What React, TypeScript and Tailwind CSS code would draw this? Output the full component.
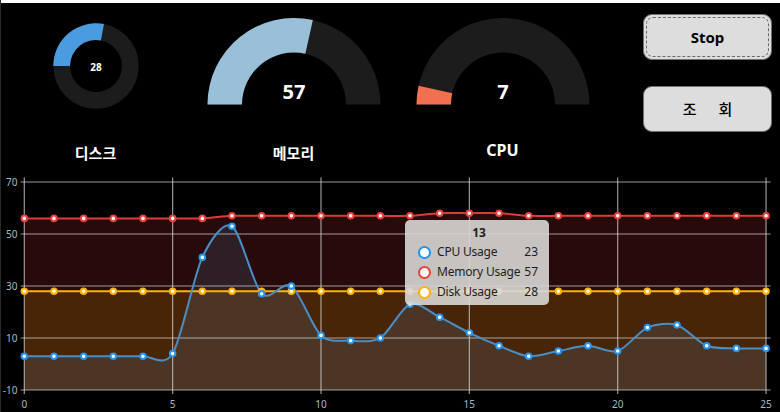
const cpu = [3, 3, 3, 3, 3, 4, 41, 53, 27, 30, 11, 9, 10, 23, 18, 12, 7, 3, 5, 7, 5, 14, 15, 7, 6, 6];
const memory = [56, 56, 56, 56, 56, 56, 56, 57, 57, 57, 57, 57, 57, 57, 58, 58, 58, 57, 57, 57, 57, 57, 57, 57, 57, 57];
const disk = Array(26).fill(28);

const X = (i: number) => 23.3 + i * 29.67;
const Y = (v: number) => 390 - (v + 10) * 2.6;

// catmull-rom -> cubic bezier (slightly relaxed tension)
function spline(data: number[]) {
    const k = 7;
    const pts = data.map((v, i) => [X(i), Y(v)]);
    let d = `M${pts[0][0]},${pts[0][1]}`;
    for (let i = 0; i < pts.length - 1; i++) {
        const p0 = pts[i - 1] || pts[i];
        const p1 = pts[i];
        const p2 = pts[i + 1];
        const p3 = pts[i + 2] || p2;
        const c1x = p1[0] + (p2[0] - p0[0]) / k;
        const c1y = p1[1] + (p2[1] - p0[1]) / k;
        const c2x = p2[0] - (p3[0] - p1[0]) / k;
        const c2y = p2[1] - (p3[1] - p1[1]) / k;
        d += ` C${c1x},${c1y} ${c2x},${c2y} ${p2[0]},${p2[1]}`;
    }
    return d;
}

const area = (data: number[]) => `${spline(data)} L${X(25)},390 L${X(0)},390 Z`;

function halfArc(cx: number, cy: number, r: number, ri: number, f0: number, f1: number) {
    const pt = (rad: number, f: number) => {
        const a = Math.PI - f * Math.PI;
        return `${cx + rad * Math.cos(a)},${cy - rad * Math.sin(a)}`;
    };
    return `M${pt(r, f0)} A${r},${r} 0 0 1 ${pt(r, f1)} L${pt(ri, f1)} A${ri},${ri} 0 0 0 ${pt(ri, f0)} Z`;
}

function ringArc(cx: number, cy: number, r: number, ri: number, f: number) {
    const pt = (rad: number, t: number) => {
        const a = Math.PI + t * 2 * Math.PI;
        return `${cx + rad * Math.cos(a)},${cy + rad * Math.sin(a)}`;
    };
    const large = f > 0.5 ? 1 : 0;
    return `M${pt(r, 0)} A${r},${r} 0 ${large} 1 ${pt(r, f)} L${pt(ri, f)} A${ri},${ri} 0 ${large} 0 ${pt(ri, 0)} Z`;
}

const Gauge = ({ value, color }: { value: number; color: string }) => (
    <svg width="174" height="87" viewBox="0 0 174 87">
        <path d={halfArc(87, 86.5, 86.5, 52, 0, 1)} fill="#1c1c1c" />
        <path d={halfArc(87, 86.5, 86.5, 52, 0, value / 100)} fill={color} />
        <text x="87" y="81" textAnchor="middle" fill="#fff" fontSize="20" fontWeight="700" fontFamily="'Noto Sans', sans-serif">
            {value}
        </text>
    </svg>
);

const labelFont = { fontFamily: "'Noto Sans', 'Noto Sans CJK KR', sans-serif" };

export default function App() {
    const xTicks = [0, 5, 10, 15, 20, 25];
    const yTicks = [70, 50, 30, 10, -10];
    return (
        <main className="w-[780px] h-[412px] bg-black overflow-hidden flex flex-col border-l border-[#2a2a2a]" style={labelFont}>
            <div className="h-[3px] bg-white shrink-0" />
            <div className="h-[167px] flex shrink-0 text-white">
                <div className="w-[189px] flex flex-col items-center pt-[20px]">
                    <svg width="86" height="86" viewBox="0 0 86 86">
                        <circle cx="43" cy="43" r="34.3" fill="none" stroke="#1c1c1c" strokeWidth="16.7" />
                        <path d={ringArc(43, 43, 42.7, 26, 0.28)} fill="#4a9be0" />
                        <text x="43" y="47.5" textAnchor="middle" fill="#fff" fontSize="10" fontWeight="700" fontFamily="'Noto Sans', sans-serif">
                            28
                        </text>
                    </svg>
                    <span className="mt-[34px] text-[15px] leading-5 font-bold">디스크</span>
                </div>
                <div className="w-[207px] flex flex-col items-center pt-[15px]">
                    <Gauge value={57} color="#9ac0d9" />
                    <span className="mt-[38px] text-[15px] leading-5 font-bold">메모리</span>
                </div>
                <div className="w-[211px] flex flex-col items-center pt-[15px]">
                    <Gauge value={7} color="#f0704f" />
                    <span className="mt-[35px] text-[16px] leading-5 font-bold">CPU</span>
                </div>
                <div className="ml-[35px] w-[129px] flex flex-col pt-[11px] gap-[26px]">
                    <button className="h-[46px] rounded-[9px] bg-[#dddddd] border border-[#707070] p-[2px] text-black">
                        <div className="h-full rounded-[7px] border border-dashed border-[#6a6a6a] flex items-center justify-center text-[15px] font-bold">
                            Stop
                        </div>
                    </button>
                    <button className="h-[46px] rounded-[9px] bg-[#dddddd] border border-[#707070] text-black text-[15px] font-medium tracking-[0.6em] pl-[0.6em]">
                        조 회
                    </button>
                </div>
            </div>
            <div className="relative h-[242px] shrink-0">
                <svg width="780" height="242" viewBox="0 170 780 242" className="block">
                    <path d={area(memory)} fill="#e53935" fillOpacity="0.17" />
                    <path d={area(disk)} fill="#ffb300" fillOpacity="0.16" />
                    <path d={area(cpu)} fill="#5a9ad4" fillOpacity="0.15" />
                    <g stroke="#d8d8d8" strokeOpacity="0.7" strokeWidth="1.2">
                        {yTicks.map((v) => (
                            <line key={v} x1="19.5" x2="769.5" y1={Y(v)} y2={Y(v)} />
                        ))}
                        {xTicks.map((i) => (
                            <line key={i} x1={X(i)} x2={X(i)} y1="177.5" y2="394" />
                        ))}
                    </g>
                    <g fontSize="10" fill="#a9b8c6" fontFamily="'Noto Sans', sans-serif">
                        {yTicks.map((v) => (
                            <text key={v} x="16.5" y={Y(v) + 3.5} textAnchor="end">
                                {v}
                            </text>
                        ))}
                        {xTicks.map((i) => (
                            <text key={i} x={X(i)} y="408" textAnchor="middle">
                                {i}
                            </text>
                        ))}
                    </g>
                    <path d={spline(memory)} fill="none" stroke="#df3b36" strokeWidth="2" />
                    <path d={spline(disk)} fill="none" stroke="#ffb300" strokeWidth="2" />
                    <path d={spline(cpu)} fill="none" stroke="#4a8ec6" strokeWidth="2" />
                    {[
                        { data: memory, color: "#e8403c" },
                        { data: disk, color: "#ffb300" },
                        { data: cpu, color: "#2394f0" },
                    ].map((s) =>
                        s.data.map((v, i) => (
                            <circle key={s.color + i} cx={X(i)} cy={Y(v)} r="2.8" fill="#fff" stroke={s.color} strokeWidth="2" />
                        ))
                    )}
                </svg>
                <div className="absolute left-[404px] top-[50px] w-[144px] h-[85px] rounded-[5px] bg-[#d9d7d5]/90 text-[#1e1e1e] text-[12px] pl-[13px] pr-[11px] pt-[4px]">
                    <div className="text-center font-bold leading-[18px] pl-[2px]">13</div>
                    {[
                        { name: "CPU Usage", value: 23, color: "#2394f0" },
                        { name: "Memory Usage", value: 57, color: "#e8403c" },
                        { name: "Disk Usage", value: 28, color: "#ffb300" },
                    ].map((r) => (
                        <div key={r.name} className="flex items-center h-[20px] whitespace-nowrap">
                            <span className="w-[13px] h-[13px] rounded-full bg-white border-2 shrink-0" style={{ borderColor: r.color }} />
                            <span className="ml-[6px] flex-1 tracking-[-0.2px]">{r.name}</span>
                            <span>{r.value}</span>
                        </div>
                    ))}
                </div>
            </div>
        </main>
    );
}
